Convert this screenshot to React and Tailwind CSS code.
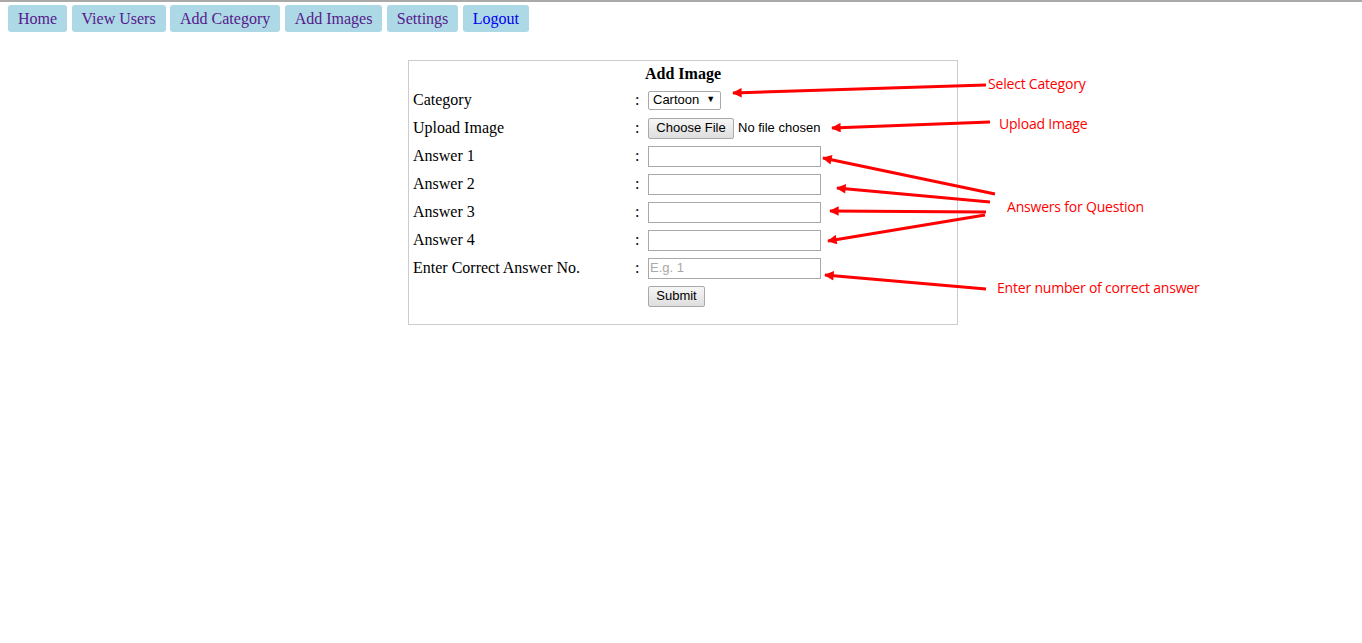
export default function App() {
  const nav = ['Home', 'View Users', 'Add Category', 'Add Images', 'Settings'];

  const rows = [
    { label: 'Answer 1' },
    { label: 'Answer 2' },
    { label: 'Answer 3' },
    { label: 'Answer 4' },
    { label: 'Enter Correct Answer No.', placeholder: 'E.g. 1' },
  ];

  const arrows = [
    { x1: 986, y1: 83, x2: 733, y2: 91 },
    { x1: 990, y1: 120, x2: 832, y2: 126 },
    { x1: 995, y1: 192, x2: 823, y2: 156 },
    { x1: 990, y1: 200, x2: 837, y2: 186 },
    { x1: 986, y1: 210, x2: 830, y2: 209 },
    { x1: 985, y1: 213, x2: 828, y2: 239 },
    { x1: 986, y1: 287, x2: 825, y2: 273 },
  ];

  return (
    <div className="relative min-h-[643px] bg-white border-t-2 border-[#a9a9a9] font-['Liberation_Serif',serif] text-[16px] text-black">
      <div className="flex gap-[4.4px] pl-[8px] pt-[3px]">
        {nav.map((n) => (
          <a key={n} className="h-[27px] px-[10px] flex items-center rounded-[3px] bg-[#add8e6] text-[#551a8b]">
            {n}
          </a>
        ))}
        <a className="h-[27px] px-[10px] flex items-center rounded-[3px] bg-[#add8e6] text-[#0000ee]">Logout</a>
      </div>

      <div className="ml-[408px] mt-[28px] w-[550px] h-[265px] border border-[#cccccc] pl-[4px] pt-px">
        <div className="h-[24px] flex items-center justify-center font-bold pr-[4px]">Add Image</div>

        <div className="h-[28px] flex items-center">
          <div className="w-[222px]">Category</div>
          <div className="w-[13px]">:</div>
          <div className="h-[19px] w-[73px] border border-[#a9a9a9] rounded-[2px] flex items-center pl-[4px] font-['Liberation_Sans',sans-serif] text-[13px]">
            Cartoon<span className="ml-[7px] text-[9px]">▼</span>
          </div>
        </div>

        <div className="h-[28px] flex items-center">
          <div className="w-[222px]">Upload Image</div>
          <div className="w-[13px]">:</div>
          <div className="flex items-center font-['Liberation_Sans',sans-serif] text-[13px]">
            <div className="h-[21px] w-[86px] border border-[#a9a9a9] rounded-[2px] bg-gradient-to-b from-[#f6f6f6] to-[#dedede] flex items-center justify-center">
              Choose File
            </div>
            <span className="ml-[4px]">No file chosen</span>
          </div>
        </div>

        {rows.map((r) => (
          <div key={r.label} className="h-[28px] flex items-center">
            <div className="w-[222px]">{r.label}</div>
            <div className="w-[13px]">:</div>
            <div className="h-[21px] w-[173px] border border-[#a9a9a9] flex items-center pl-[1px] font-['Liberation_Sans',sans-serif] text-[13px] text-[#a9a9a9]">
              {r.placeholder || ''}
            </div>
          </div>
        ))}

        <div className="h-[28px] flex items-center">
          <div className="w-[235px]"></div>
          <div className="h-[21px] w-[57px] border border-[#a9a9a9] rounded-[2px] bg-gradient-to-b from-[#f6f6f6] to-[#dedede] flex items-center justify-center font-['Liberation_Sans',sans-serif] text-[13px]">
            Submit
          </div>
        </div>
      </div>

      <svg className="absolute left-0 top-0 pointer-events-none" width="1362" height="643">
        <defs>
          <marker id="head" viewBox="0 0 10 10" refX="9" refY="5" markerWidth="5" markerHeight="3.2" orient="auto" markerUnits="strokeWidth">
            <path d="M0 0 L10 5 L0 10 z" fill="#ff0000" />
          </marker>
        </defs>
        {arrows.map((a, i) => (
          <line key={i} x1={a.x1} y1={a.y1} x2={a.x2} y2={a.y2} stroke="#ff0000" strokeWidth="3" markerEnd="url(#head)" />
        ))}
      </svg>

      <div className="absolute left-[988px] top-[71px] text-[#ff0000] text-[14px] font-['Open_Sans',sans-serif] tracking-[-0.2px]">Select Category</div>
      <div className="absolute left-[999px] top-[111px] text-[#ff0000] text-[14px] font-['Open_Sans',sans-serif] tracking-[-0.2px]">Upload Image</div>
      <div className="absolute left-[1007px] top-[194px] text-[#ff0000] text-[14px] font-['Open_Sans',sans-serif] tracking-[-0.2px]">Answers for Question</div>
      <div className="absolute left-[997px] top-[275px] text-[#ff0000] text-[14px] font-['Open_Sans',sans-serif] tracking-[-0.2px]">Enter number of correct answer</div>
    </div>
  );
}
